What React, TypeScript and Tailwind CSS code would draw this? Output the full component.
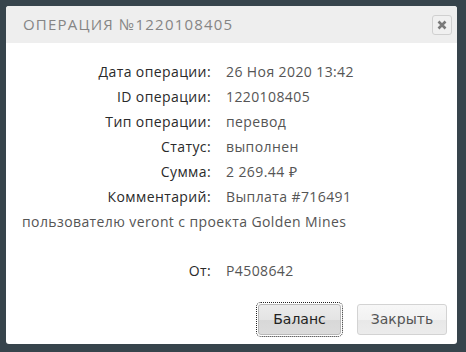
import React from "react";

const rows: [string, string][] = [
  ["Дата операции:", "26 Ноя 2020 13:42"],
  ["ID операции:", "1220108405"],
  ["Тип операции:", "перевод"],
  ["Статус:", "выполнен"],
  ["Сумма:", "2 269.44 ₽"],
  ["Комментарий:", "Выплата #716491"],
];

export default function App() {
  return (
    <div className="w-[466px] h-[352px] bg-[#37444c] p-[6px] pr-[9px] pb-[8px]" style={{ fontFamily: '"Open Sans", sans-serif' }}>
      <div className="h-full w-full bg-white rounded-[3px] flex flex-col overflow-hidden">
        <div className="h-[37px] bg-[#eeeeee] flex items-center justify-between pl-[17px] pr-[5px]">
          <span className="text-[15px] tracking-[1.2px] text-[#858585] uppercase">Операция №1220108405</span>
          <button className="w-[20px] h-[20px] rounded-[3px] border border-[#d0d0d0] bg-[#f0f0f0] flex items-center justify-center">
            <svg width="10" height="10" viewBox="0 0 10 10">
              <path d="M1.5 1.5L8.5 8.5M8.5 1.5L1.5 8.5" stroke="#7a7a7a" strokeWidth="2.6" strokeLinecap="butt" />
            </svg>
          </button>
        </div>
        <div className="flex-1 flex flex-col px-[16px] pt-[16px]">
          <div className="grid grid-cols-[189px_1fr] gap-x-[15px] text-[14px] tracking-[0.4px]">
            {rows.map(([l, v]) => (
              <React.Fragment key={l}>
                <div className="h-[25px] flex items-center justify-end text-[#2a2a2a]">{l}</div>
                <div className="h-[25px] flex items-center text-[#555]">{v}</div>
              </React.Fragment>
            ))}
            <div className="col-span-2 h-[25px] flex items-center text-[#555]">пользователю veront c проекта Golden Mines</div>
            <div className="col-span-2 h-[24px]" />
            <div className="h-[25px] flex items-center justify-end text-[#2a2a2a]">От:</div>
            <div className="h-[25px] flex items-center text-[#555]">P4508642</div>
          </div>
          <div className="flex justify-end gap-[16px] mt-auto mb-[9px] -mr-[6px]" style={{ fontFamily: '"DejaVu Sans", sans-serif' }}>
            <div className="outline outline-1 outline-dotted outline-[#222] outline-offset-[1px] rounded-[3px]">
              <button className="w-[83px] h-[31px] rounded-[3px] border border-[#b8b8b8] text-[14px] text-[#222] bg-[linear-gradient(#ebebeb_0%,#e4e4e4_50%,#d8d8d8_51%,#dcdcdc_100%)]">
                Баланс
              </button>
            </div>
            <button className="w-[90px] h-[31px] rounded-[3px] border border-[#d3d3d3] text-[14px] text-[#555] bg-[linear-gradient(#f7f7f7_0%,#f2f2f2_50%,#e8e8e8_51%,#ececec_100%)]">
              Закрыть
            </button>
          </div>
        </div>
      </div>
    </div>
  );
}
